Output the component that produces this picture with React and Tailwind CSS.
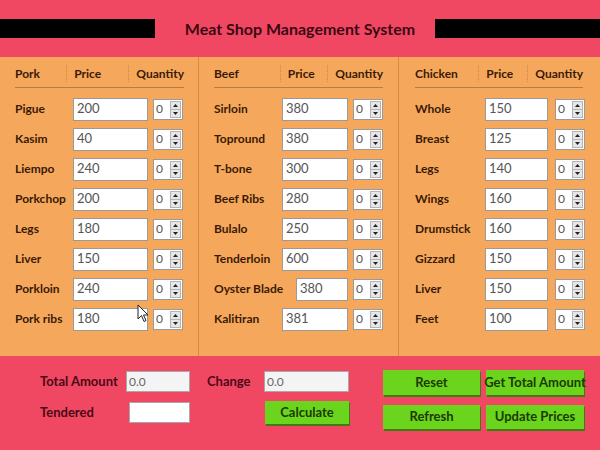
import React from "react";

const FONT = { fontFamily: 'Lato, "Liberation Sans", sans-serif' };

const columns = [
  {
    name: "Pork",
    pad: "pl-[15px]",
    headLabel: "w-[52px]",
    headPrice: "w-[63px] pl-[7px]",
    headQty: "pl-[7px]",
    rowLabel: "w-[58px]",
    row: "w-[168px]",
    spinGap: "ml-[5px]",
    line: "w-[169px]",
    border: "border-r border-[#d28c48]",
    items: [
      ["Pigue", "200"], ["Kasim", "40"], ["Liempo", "240"], ["Porkchop", "200"],
      ["Legs", "180"], ["Liver", "150"], ["Porkloin", "240"], ["Pork ribs", "180"],
    ],
  },
  {
    name: "Beef",
    pad: "pl-[15px]",
    headLabel: "w-[70px]",
    headPrice: "w-[50px] pl-[7px]",
    headQty: "pl-[7px]",
    rowLabel: "w-[68px]",
    row: "w-[169px]",
    spinGap: "ml-[5px]",
    line: "w-[169px]",
    border: "border-r border-[#d28c48]",
    items: [
      ["Sirloin", "380"], ["Topround", "380"], ["T-bone", "300"], ["Beef Ribs", "280"],
      ["Bulalo", "250"], ["Tenderloin", "600"], ["Oyster Blade", "380", "w-[82px]"], ["Kalitiran", "381"],
    ],
  },
  {
    name: "Chicken",
    pad: "pl-[16px]",
    headLabel: "w-[68px]",
    headPrice: "w-[52px] pl-[7px]",
    headQty: "pl-[7px]",
    rowLabel: "w-[70px]",
    row: "w-[170px]",
    spinGap: "ml-[7px]",
    line: "w-[168px]",
    border: "",
    items: [
      ["Whole", "150"], ["Breast", "125"], ["Legs", "140"], ["Wings", "160"],
      ["Drumstick", "160"], ["Gizzard", "150"], ["Liver", "150"], ["Feet", "100"],
    ],
  },
];

function Spinner() {
  return (
    <div className="flex h-[21px] w-[30px] items-center border border-[#9a9a9a] bg-white">
      <span className="flex-1 pl-[2px] text-[12px] text-[#555]">0</span>
      <div className="mr-[1px] flex h-[17px] w-[11px] flex-col border border-[#b4b4b4] bg-[#e6e6e6]">
        <div className="flex flex-1 items-center justify-center border-b border-[#b4b4b4]">
          <svg width="5" height="3" viewBox="0 0 5 3"><path d="M0 3 L2.5 0 L5 3 Z" fill="#222" /></svg>
        </div>
        <div className="flex flex-1 items-center justify-center">
          <svg width="5" height="3" viewBox="0 0 5 3"><path d="M0 0 L2.5 3 L5 0 Z" fill="#222" /></svg>
        </div>
      </div>
    </div>
  );
}

function Column({ c }) {
  return (
    <div className={`flex flex-col ${c.pad} ${c.border}`}>
      <div className={`flex h-[31px] items-center border-b border-[#b87d45] pt-[3px] ${c.line} whitespace-nowrap text-[12px] font-bold text-[#3a1a06]`}>
        <div className={c.headLabel}>{c.name}</div>
        <div className={`flex h-[17px] items-center border-l border-dotted border-[#c9884a] ${c.headPrice}`}>Price</div>
        <div className={`flex h-[17px] items-center border-l border-dotted border-[#c9884a] ${c.headQty}`}>Quantity</div>
      </div>
      <div className="mt-[6px] flex flex-col">
        {c.items.map(([label, price, lw]) => (
          <div key={label} className={`flex h-[30px] items-center ${c.row}`}>
            <div className={`${lw || c.rowLabel} shrink-0 whitespace-nowrap text-[12px] font-bold text-[#3a1a06]`}>{label}</div>
            <div className="flex h-[23px] min-w-0 flex-1 items-center border border-[#9a9a9a] bg-white pl-[3px] text-[13px] text-[#555]">{price}</div>
            <div className={`shrink-0 ${c.spinGap}`}><Spinner /></div>
          </div>
        ))}
      </div>
    </div>
  );
}

function GreenButton({ children, w, h }) {
  return (
    <div className={`flex items-center justify-center whitespace-nowrap bg-[#6bd41c] text-[13px] font-bold text-[#1c3a02] shadow-[1px_2px_0_#3f7a12] ${w} ${h}`}>
      {children}
    </div>
  );
}

export default function App() {
  return (
    <div className="relative h-[450px] w-[600px] overflow-hidden bg-[#f04862]" style={FONT}>
      <div className="flex h-[57px] items-center justify-between">
        <div className="h-[19px] w-[155px] bg-black" />
        <div className="whitespace-nowrap pl-[10px] text-[16px] font-bold text-[#3c0912]">Meat Shop Management System</div>
        <div className="h-[19px] w-[165px] bg-black" />
      </div>
      <div className="grid h-[299px] grid-cols-[199px_200px_201px] bg-[#f5a85c]">
        {columns.map((c) => (
          <Column key={c.name} c={c} />
        ))}
      </div>
      <div className="flex whitespace-nowrap pt-[14px] text-[13px] font-bold text-[#4a0a14]">
        <div className="ml-[40px] mt-[1px] flex flex-col gap-[10px]">
          <div className="flex h-[21px] items-center">
            <div className="w-[86px]">Total Amount</div>
            <div className="flex h-[21px] w-[64px] items-center border border-[#a8a8a8] bg-[#f4f4f4] pl-[2px] text-[12px] font-normal text-[#666]">0.0</div>
          </div>
          <div className="flex h-[21px] items-center">
            <div className="w-[89px]">Tendered</div>
            <div className="h-[21px] w-[61px] border border-[#a8a8a8] bg-white" />
          </div>
        </div>
        <div className="ml-[17px] mt-[1px] flex flex-col gap-[9px]">
          <div className="flex h-[21px] items-center">
            <div className="w-[57px]">Change</div>
            <div className="flex h-[21px] w-[85px] items-center border border-[#a8a8a8] bg-[#f4f4f4] pl-[2px] text-[12px] font-normal text-[#666]">0.0</div>
          </div>
          <div className="ml-[58px]">
            <GreenButton w="w-[84px]" h="h-[23px]">Calculate</GreenButton>
          </div>
        </div>
        <div className="ml-[34px] grid grid-cols-[97px_98px] gap-x-[6px] gap-y-[10px]">
          <GreenButton w="w-[97px]" h="h-[25px]">Reset</GreenButton>
          <GreenButton w="w-[98px]" h="h-[25px]">Get Total Amount</GreenButton>
          <GreenButton w="w-[97px]" h="h-[24px]">Refresh</GreenButton>
          <GreenButton w="w-[98px]" h="h-[24px]">Update Prices</GreenButton>
        </div>
      </div>
      <svg className="absolute left-[137px] top-[304px]" width="12" height="19" viewBox="0 0 12 19">
        <path d="M1 1 L1 15 L4.5 11.5 L7 17.5 L9 16.5 L6.5 11 L11 11 Z" fill="white" stroke="#222" strokeWidth="1" strokeLinejoin="round" />
      </svg>
    </div>
  );
}
